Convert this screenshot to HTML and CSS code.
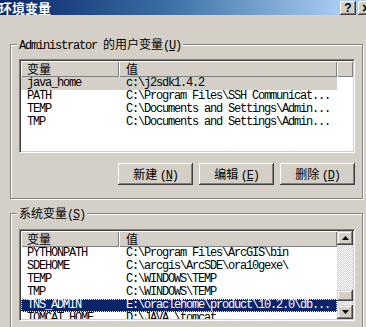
FILE: index.html
```html
<!DOCTYPE html>
<html lang="zh-CN">
<head>
<meta charset="utf-8">
<title>环境变量</title>
<link rel="stylesheet" href="styles.css">
</head>
<body>
<div class="titlebar">
  <span class="title">环境变量</span>
  <span class="tbtn help">?</span>
  <span class="tbtn close">×</span>
</div>

<div class="group g1">
  <div class="legend"><span class="mono">Administrator </span>的用户变量<span class="mono">(<u>U</u>)</span></div>
  <div class="listview lv1">
    <div class="lv-main">
      <div class="hdr"><div class="hc c1">变量</div><div class="hc c2">值</div><div class="hc fill"></div></div>
      <div class="row inactive"><div class="c1">java_home</div><div class="c2">c:\j2sdk1.4.2</div></div>
      <div class="row"><div class="c1">PATH</div><div class="c2">C:\Program Files\SSH Communicat...</div></div>
      <div class="row"><div class="c1">TEMP</div><div class="c2">C:\Documents and Settings\Admin...</div></div>
      <div class="row"><div class="c1">TMP</div><div class="c2">C:\Documents and Settings\Admin...</div></div>
    </div>
  </div>
  <div class="buttons">
    <button class="btn">新建 <span class="mono">(<u>N</u>)</span></button>
    <button class="btn">编辑 <span class="mono">(<u>E</u>)</span></button>
    <button class="btn">删除 <span class="mono">(<u>D</u>)</span></button>
  </div>
</div>

<div class="group g2">
  <div class="legend">系统变量<span class="mono">(<u>S</u>)</span></div>
  <div class="listview lv2">
    <div class="lv-main">
      <div class="hdr"><div class="hc c1">变量</div><div class="hc c2">值</div><div class="hc fill"></div></div>
      <div class="row"><div class="c1">PYTHONPATH</div><div class="c2">C:\Program Files\ArcGIS\bin</div></div>
      <div class="row"><div class="c1">SDEHOME</div><div class="c2">C:\arcgis\ArcSDE\ora10gexe\</div></div>
      <div class="row"><div class="c1">TEMP</div><div class="c2">C:\WINDOWS\TEMP</div></div>
      <div class="row"><div class="c1">TMP</div><div class="c2">C:\WINDOWS\TEMP</div></div>
      <div class="row sel"><div class="c1">TNS_ADMIN</div><div class="c2">E:\oraclehome\product\10.2.0\db...</div></div>
      <div class="row"><div class="c1">TOMCAT_HOME</div><div class="c2">D:\JAVA \tomcat</div></div>
    </div>
    <div class="sb">
      <div class="sb-btn"><svg width="7" height="4" viewBox="0 0 7 4"><polygon points="0,4 7,4 3.5,0" fill="#000"/></svg></div>
      <div class="sb-track"></div>
      <div class="sb-thumb"></div>
      <div class="sb-track2"></div>
      <div class="sb-btn"><svg width="7" height="4" viewBox="0 0 7 4"><polygon points="0,0 7,0 3.5,4" fill="#000"/></svg></div>
    </div>
  </div>
</div>
</body>
</html>
```

FILE: styles.css
```css
body {
  margin: 0;
  width: 366px;
  height: 327px;
  overflow: hidden;
  background: #d4d0c8;
  font-family: "Noto Sans CJK SC", sans-serif;
  font-size: 12px;
  color: #000;
}

.mono {
  font-family: "Liberation Mono", "Noto Sans CJK SC", monospace;
  letter-spacing: -1.2px;
}

.titlebar {
  height: 15px;
  display: flex;
  align-items: center;
  background: linear-gradient(to right, #0a246a 0%, #3a6ea5 45%, #a6caf0 92%);
}

.title {
  flex: 1;
  color: #fff;
  font-weight: bold;
  font-size: 13px;
  line-height: 15px;
  margin-left: -1px;
  white-space: nowrap;
}

.tbtn {
  width: 16px;
  height: 14px;
  flex: none;
  margin-left: 2px;
  background: #d4d0c8;
  box-shadow: inset -1px -1px #404040, inset 1px 1px #fff, inset -2px -2px #808080;
  font: bold 12px/14px "Liberation Sans", sans-serif;
  text-align: center;
  color: #000;
}

.close {
  margin-right: -8px;
  font-size: 14px;
}

.group {
  width: 353px;
  box-sizing: border-box;
  margin: 14px 0 0 10px;
  border: 1px solid #808080;
  box-shadow: inset 1px 1px #fff, 1px 1px #fff;
  padding: 0 7px 13px 8px;
  display: flex;
  flex-direction: column;
}

.g1 {
  margin-top: 29px;
}

.g2 {
  height: 200px;
}

.legend {
  align-self: flex-start;
  margin: -8px 0 8px -2px;
  padding: 0 2px;
  height: 14px;
  line-height: 14px;
  background: #d4d0c8;
  white-space: nowrap;
}

.g2 .legend {
  margin-bottom: 9px;
}

.listview {
  box-sizing: border-box;
  height: 94px;
  flex: none;
  background: #fff;
  border: 1px solid;
  border-color: #808080 #fff #fff #808080;
  box-shadow: inset 1px 1px #404040, inset -1px -1px #d4d0c8;
  padding: 1px;
  display: flex;
  overflow: hidden;
}

.lv2 {
  height: 92px;
}

.lv-main {
  flex: 1;
  min-width: 0;
  overflow: hidden;
}

.hdr {
  display: flex;
  height: 16px;
}

.hc {
  box-sizing: border-box;
  background: #d4d0c8;
  box-shadow: inset 1px 1px #fff, inset -1px -1px #808080;
  line-height: 16px;
}

.c1 {
  width: 98px;
  flex: none;
  box-sizing: border-box;
  padding-left: 6px;
  white-space: nowrap;
}

.c2 {
  width: 218px;
  flex: none;
  box-sizing: border-box;
  padding-left: 7px;
  white-space: nowrap;
}

.fill {
  flex: 1;
}

.row {
  display: flex;
  width: 316px;
  height: 13px;
  line-height: 13px;
  font-family: "Liberation Mono", monospace;
  font-size: 12px;
  letter-spacing: -1.2px;
  white-space: nowrap;
}

.inactive {
  background: #d4d0c8;
}

.sel {
  background: #0a246a;
  color: #fff;
  outline: 1px dotted #ffff80;
  outline-offset: -1px;
}

.sb {
  width: 16px;
  flex: none;
  display: flex;
  flex-direction: column;
  background-color: #fff;
  background-image: conic-gradient(#d4d0c8 25%, #fff 0 50%, #d4d0c8 0 75%, #fff 0);
  background-size: 2px 2px;
}

.sb-btn {
  height: 14px;
  flex: none;
  background: #d4d0c8;
  box-shadow: inset -1px -1px #404040, inset 1px 1px #d4d0c8, inset -2px -2px #808080, inset 2px 2px #fff;
  display: flex;
  align-items: center;
  justify-content: center;
}

.sb-btn svg {
  display: block;
}

.sb-track {
  flex: 1;
}

.sb-thumb {
  height: 11px;
  flex: none;
  background: #d4d0c8;
  box-shadow: inset -1px -1px #404040, inset 1px 1px #d4d0c8, inset -2px -2px #808080, inset 2px 2px #fff;
}

.sb-track2 {
  height: 4px;
  flex: none;
}

.buttons {
  display: flex;
  justify-content: flex-end;
  gap: 6px;
  margin-top: 10px;
}

.btn {
  width: 75px;
  height: 22px;
  box-sizing: border-box;
  padding: 0;
  border: none;
  background: #d4d0c8;
  box-shadow: inset -1px -1px #404040, inset 1px 1px #fff, inset -2px -2px #808080, inset 2px 2px #d4d0c8;
  font-family: "Noto Sans CJK SC", sans-serif;
  font-size: 12px;
  line-height: 22px;
  color: #000;
}
```
